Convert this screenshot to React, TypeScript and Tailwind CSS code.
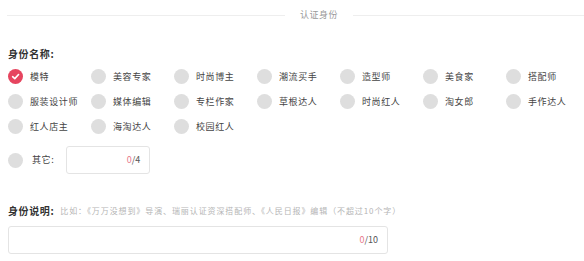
import React from 'react';

const roles = [
  '模特', '美容专家', '时尚博主', '潮流买手', '造型师', '美食家', '搭配师',
  '服装设计师', '媒体编辑', '专栏作家', '草根达人', '时尚红人', '淘女郎', '手作达人',
  '红人店主', '海淘达人', '校园红人',
];

function Dot({ checked }: { checked?: boolean }) {
  if (checked) {
    return (
      <span className="w-[15px] h-[15px] rounded-full bg-[#e6455f] flex items-center justify-center shrink-0">
        <svg width="9" height="9" viewBox="0 0 10 10" fill="none">
          <path d="M1.8 5.2 L4.2 7.4 L8.4 2.8" stroke="#fff" strokeWidth="1.8" strokeLinecap="round" strokeLinejoin="round" />
        </svg>
      </span>
    );
  }
  return <span className="w-[15px] h-[15px] rounded-full bg-[#dedede] shrink-0" />;
}

export default function App() {
  return (
    <div className="w-[584px] h-[261px] bg-white text-[#333] overflow-hidden" style={{ fontFamily: '"Noto Sans CJK SC", "Noto Sans", sans-serif' }}>
      <div className="flex items-center pt-[8px] pl-[7px]">
        <div className="h-px bg-[#eeeeee] w-[278px]" />
        <span className="text-[9px] text-[#999] px-[15px] leading-[14px] tracking-[0.5px]">认证身份</span>
        <div className="h-px bg-[#eeeeee] flex-1" />
      </div>

      <div className="pl-[8px] mt-[25px]">
        <div className="text-[10px] font-bold leading-[14px] tracking-[0.6px]">身份名称:</div>
        <div className="grid grid-cols-[repeat(7,83px)] gap-y-[10px] mt-[8px]">
          {roles.map((r, i) => (
            <div key={r} className="flex items-center h-[15px]">
              <Dot checked={i === 0} />
              <span className="ml-[7px] text-[9px] tracking-[0.6px] leading-[15px] text-[#444]">{r}</span>
            </div>
          ))}
        </div>

        <div className="flex items-center mt-[12px]">
          <Dot />
          <span className="ml-[9px] text-[9px] tracking-[0.6px] text-[#444]">其它:</span>
          <div className="ml-[12px] w-[84px] h-[28px] border border-[#e4e4e4] rounded-[3px] flex items-center justify-end pr-[9px] text-[9px]">
            <span className="text-[#e8798c]">0</span>
            <span className="text-[#555]">/4</span>
          </div>
        </div>

        <div className="flex items-center mt-[30px] leading-[14px]">
          <span className="text-[10px] font-bold tracking-[0.6px]">身份说明:</span>
          <span className="ml-[6px] text-[8px] text-[#b5b5b5] tracking-[0.9px] whitespace-nowrap">比如：《万万没想到》导演、瑞丽认证资深搭配师、《人民日报》编辑（不超过10个字）</span>
        </div>

        <div className="mt-[8px] w-[380px] h-[28px] border border-[#e4e4e4] rounded-[3px] flex items-center justify-end pr-[9px] text-[9px]">
          <span className="text-[#e8798c]">0</span>
          <span className="text-[#555]">/10</span>
        </div>
      </div>
    </div>
  );
}
